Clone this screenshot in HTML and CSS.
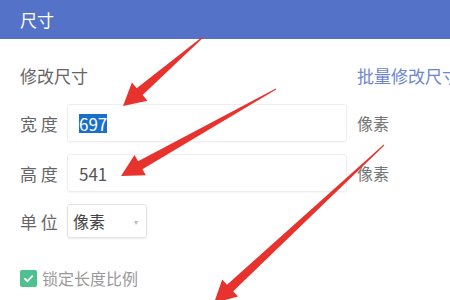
FILE: index.html
```html
<!DOCTYPE html>
<html lang="zh-CN">
<head>
  <meta charset="UTF-8">
  <title>尺寸</title>
  <link rel="stylesheet" href="styles.css">
</head>
<body>
  <div class="dialog">
    <div class="header">尺寸</div>
    <div class="content">
      <div class="form">
        <div class="title">修改尺寸</div>
        <div class="batch">批量修改尺寸</div>

        <div class="label">宽 度</div>
        <div class="input"><span class="selected">697</span></div>
        <div class="unit">像素</div>

        <div class="label">高 度</div>
        <div class="input">541</div>
        <div class="unit">像素</div>

        <div class="label">单 位</div>
        <div class="select-wrap">
          <div class="select">
            <span>像素</span>
            <span class="caret">▾</span>
          </div>
        </div>
        <div></div>
      </div>

      <div class="lock">
        <span class="checkbox">
          <svg width="11" height="11" viewBox="0 0 12 12"><path d="M2 6.2 L4.9 9 L10 3.4" fill="none" stroke="#fff" stroke-width="2" stroke-linecap="round" stroke-linejoin="round"/></svg>
        </span>
        <span class="lock-text">锁定长度比例</span>
      </div>
    </div>

    <!-- annotation arrows drawn over the dialog -->
    <svg class="arrows" width="450" height="300" viewBox="0 0 450 300">
      <polygon points="203.3,37.4 142.6,95.1 147.5,100.8 123,106 131.9,82.5 136.7,88.3 202.7,36.6" />
      <polygon points="276.2,89.4 142.4,169.2 145.9,175.3 121,176 134.5,155.1 138.1,161.3 275.8,88.6" />
      <polygon points="384.3,145.4 233.2,291.3 238.0,296.5 214,303 222.2,279.5 227.0,284.7 383.7,144.6" />
    </svg>
  </div>
</body>
</html>
```

FILE: styles.css
```css
* {
  box-sizing: border-box;
}
body {
  margin: 0;
  background: #fff;
  font-family: "Noto Sans CJK SC", "Noto Sans", sans-serif;
  overflow: hidden;
}
.dialog {
  position: relative;
  width: 450px;
  height: 300px;
  overflow: hidden;
}
.header {
  height: 39px;
  line-height: 39px;
  padding-left: 20px;
  background: #5472c8;
  color: #fff;
  font-size: 17px;
}
.content {
  padding: 24px 0 0 20px;
}
.form {
  display: grid;
  grid-template-columns: 47px 280px auto;
  row-gap: 12px;
  align-items: center;
}
.title {
  grid-column: 1 / 3;
  height: 24px;
  line-height: 24px;
  font-size: 17px;
  color: #666;
  margin-bottom: 4px;
}
.batch {
  padding-left: 10px;
  font-size: 17px;
  color: #6c86cf;
  white-space: nowrap;
  margin-bottom: 4px;
}
.label {
  font-size: 17px;
  color: #666;
}
.input {
  height: 38px;
  border: 1px solid #eee;
  border-radius: 3px;
  padding-left: 11px;
  display: flex;
  align-items: center;
  font-size: 17px;
  color: #555;
  box-shadow: 0 1px 2px rgba(0,0,0,0.04);
}
.selected {
  background: #1a6fcb;
  color: #fff;
  line-height: 19px;
}
.unit {
  padding-left: 10px;
  font-size: 16px;
  color: #777;
}
.select-wrap {
  display: flex;
}
.select {
  width: 80px;
  height: 34px;
  border: 1px solid #e2e2e2;
  border-radius: 3px;
  box-shadow: 0 1px 2px rgba(0,0,0,0.08);
  display: flex;
  align-items: center;
  justify-content: space-between;
  padding: 0 8px 0 5px;
  font-size: 16px;
  color: #444;
}
.caret {
  font-size: 8px;
  color: #bbb;
}
.lock {
  margin-top: 28px;
  display: flex;
  align-items: center;
  gap: 5px;
}
.checkbox {
  width: 17px;
  height: 17px;
  border-radius: 2px;
  background: #4fc08f;
  display: flex;
  align-items: center;
  justify-content: center;
}
.lock-text {
  font-size: 16px;
  color: #999;
}
.arrows {
  position: absolute;
  left: 0;
  top: 0;
  pointer-events: none;
}
.arrows polygon {
  fill: #e8322e;
}
```
